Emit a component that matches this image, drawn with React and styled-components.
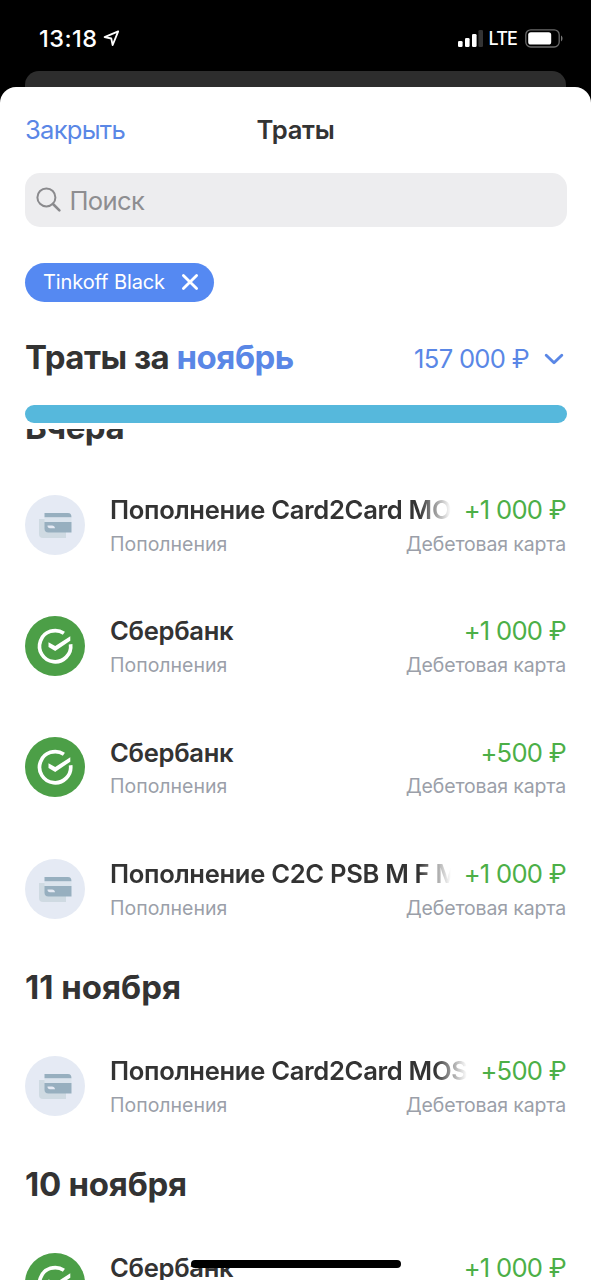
import React from "react";
import styled, { createGlobalStyle } from "styled-components";

const GlobalStyle = createGlobalStyle`
  * {
    box-sizing: border-box;
  }
  body {
    margin: 0;
    background: #000;
    font-family: Inter, "Liberation Sans", sans-serif;
    color: #333333;
  }
`;

const Screen = styled.div`
  position: relative;
  display: flex;
  flex-direction: column;
  height: 1280px;
  overflow: hidden;
  background: #000;
`;

const StatusBar = styled.div`
  display: flex;
  align-items: center;
  justify-content: space-between;
  height: 71px;
  padding: 5px 27px 0 39px;
  color: #fff;
`;

const StatusGroup = styled.div`
  display: flex;
  align-items: center;
`;

const Time = styled.span`
  font-size: 23.5px;
  font-weight: 500;
  letter-spacing: 0.5px;
  margin-right: 5px;
`;

const Network = styled.span`
  font-size: 18px;
  font-weight: 500;
  letter-spacing: -0.9px;
  margin: 1px 8px 0 6px;
`;

// the screen that stays behind the modal
const BackSheet = styled.div`
  flex: none;
  height: 30px;
  margin: 0 25px -14px;
  border-radius: 14px 14px 0 0;
  background: #2d2d2d;
`;

const Sheet = styled.div`
  position: relative;
  display: flex;
  flex-direction: column;
  flex: 1;
  min-height: 0;
  border-radius: 16px 16px 0 0;
  background: #fff;
`;

const Header = styled.div`
  display: grid;
  grid-template-columns: 1fr auto 1fr;
  align-items: center;
  height: 86px;
  padding: 0 25px 2px;
`;

const CloseButton = styled.button`
  justify-self: start;
  padding: 0;
  border: 0;
  background: none;
  font: inherit;
  font-size: 25.6px;
  letter-spacing: -0.75px;
  color: #5a87e6;
`;

const Title = styled.h1`
  margin: 0;
  font-size: 25.6px;
  font-weight: 600;
  letter-spacing: -0.3px;
`;

const Search = styled.div`
  display: flex;
  align-items: center;
  flex: none;
  height: 54px;
  margin: 0 24.5px;
  padding-left: 11px;
  border-radius: 15px;
  background: #ededef;
  font-size: 25.6px;
  letter-spacing: -0.65px;
  color: #8e8e91;

  span {
    margin-left: 8px;
  }
`;

const Chip = styled.div`
  display: flex;
  align-items: center;
  flex: none;
  align-self: flex-start;
  width: 189px;
  height: 39px;
  margin: 35.5px 0 0 24.5px;
  padding-left: 18.5px;
  border-radius: 20px;
  background: #5589f2;
  font-size: 20px;
  letter-spacing: -0.1px;
  color: #fff;

  svg {
    margin-left: 16px;
  }
`;

const Summary = styled.div`
  display: flex;
  align-items: center;
  justify-content: space-between;
  flex: none;
  height: 103.5px;
  padding: 7px 25px 0;
`;

const Heading = styled.h2`
  margin: 0;
  font-size: 33px;
  font-weight: 700;
  letter-spacing: ${(props) => props.$spacing || "-0.5px"};

  em {
    font-style: normal;
    color: #5a87e6;
  }
`;

const Total = styled.div`
  display: flex;
  align-items: center;
  padding-top: 3px;
  font-size: 25.6px;
  letter-spacing: -0.7px;
  color: #5a87e6;

  svg {
    margin: 2px 2px 0 15px;
  }
`;

const Progress = styled.div`
  flex: none;
  height: 18px;
  margin: 0 24.5px 6px;
  border-radius: 9px;
  background: #56b8dc;
`;

const List = styled.div`
  flex: 1;
  min-height: 0;
  overflow: hidden;
`;

// list is scrolled a little, so the first heading is cut off
const ListContent = styled.div`
  margin-top: -40.7px;
`;

const SectionTitle = styled.div`
  display: flex;
  align-items: center;
  height: 75.7px;
  padding: 0.8px 25px 0;
`;

const Row = styled.div`
  display: flex;
  align-items: center;
  height: 121.3px;
  padding: 0 25px;
`;

const Texts = styled.div`
  flex: 1;
  min-width: 0;
  margin-left: 25px;
  padding-top: 2px;
`;

const Line = styled.div`
  display: flex;
  align-items: center;
  justify-content: space-between;
  height: ${(props) => props.$height}px;
  white-space: nowrap;
`;

const Name = styled.div`
  flex: 1;
  min-width: 0;
  margin-right: 13px;
  overflow: hidden;
  font-size: 25.6px;
  font-weight: 600;
  letter-spacing: -0.32px;
  mask-image: ${(props) =>
    props.$fade ? "linear-gradient(to left, transparent 0, #000 32px)" : "none"};
`;

const Amount = styled.div`
  font-size: 25.6px;
  letter-spacing: -0.72px;
  color: #4caf47;
`;

const Note = styled.div`
  font-size: 19.5px;
  letter-spacing: ${(props) => props.$spacing || "0"};
  color: #9b9fa9;
`;

const HomeIndicator = styled.div`
  position: absolute;
  left: 191px;
  bottom: 12px;
  width: 210px;
  height: 8px;
  border-radius: 4px;
  background: #000;
`;

const LocationIcon = () => (
  <svg width="17" height="17" viewBox="0 0 17 17" fill="none">
    <path
      d="M15.2 1.3L1.6 7.2L8.3 8.5L9.6 15.2Z"
      stroke="#fff"
      strokeWidth="1.8"
      strokeLinejoin="round"
    />
  </svg>
);

const SignalIcon = () => (
  <svg width="26" height="17" viewBox="0 0 26 17" fill="#fff">
    <rect x="1" y="11" width="4.6" height="6" rx="1.3" />
    <rect x="8" y="8" width="4.6" height="9" rx="1.3" />
    <rect x="15" y="4" width="4.6" height="13" rx="1.3" />
    <rect x="21.4" y="0" width="4.6" height="17" rx="1.3" fill="#333" />
  </svg>
);

const BatteryIcon = () => (
  <svg width="39" height="19" viewBox="0 0 39 19">
    <rect
      x="0.8"
      y="0.8"
      width="33.4"
      height="17.2"
      rx="5"
      fill="none"
      stroke="#6a6a6a"
      strokeWidth="1.3"
    />
    <rect x="3.2" y="3.2" width="23" height="12.4" rx="2.6" fill="#fff" />
    <path d="M36 6.6c2 .8 2 5 0 5.8z" fill="#777" />
  </svg>
);

const SearchIcon = () => (
  <svg width="26" height="26" viewBox="0 0 26 26" fill="none" stroke="#8a8a8d">
    <circle cx="10.4" cy="10.4" r="9" strokeWidth="2" />
    <path d="M17 17L23.4 23.4" strokeWidth="2.6" strokeLinecap="round" />
  </svg>
);

const CrossIcon = () => (
  <svg width="18" height="18" viewBox="0 0 18 18">
    <path
      d="M2.4 2.4L15.6 15.6M15.6 2.4L2.4 15.6"
      stroke="#fff"
      strokeWidth="2.8"
      strokeLinecap="round"
    />
  </svg>
);

const ChevronIcon = () => (
  <svg width="20" height="13" viewBox="0 0 20 13" fill="none">
    <path
      d="M2.2 2.2L10 9.8L17.8 2.2"
      stroke="#5a87e6"
      strokeWidth="2.9"
      strokeLinecap="round"
      strokeLinejoin="round"
    />
  </svg>
);

const CardIcon = () => (
  <svg width="60" height="60" viewBox="0 0 60 60">
    <circle cx="30" cy="30" r="30" fill="#e5eaf4" />
    <path d="M14 24H41V43H18Q14 43 14 39Z" fill="#cfdae2" />
    <path d="M19.5 22.5H46.5V27H19.5Z" fill="#dbe4ed" />
    <path d="M19.5 18H43Q46.5 18 46.5 22.3H19.5Z" fill="#97afbf" />
    <path d="M19.5 27H46.5V37.5H23.5Q19.5 37.5 19.5 33.5Z" fill="#97afbf" />
    <path d="M22.5 30.5H27Q29.5 30.5 30 33.3H25Q22.5 33.3 22.5 30.5Z" fill="#e5eaf4" />
  </svg>
);

const SberIcon = () => (
  <svg width="60" height="60" viewBox="0 0 60 60" fill="none">
    <circle cx="30" cy="30" r="30" fill="#4c9f47" />
    <path
      d="M38.9 17.3A15.6 15.6 0 1 0 45.6 28.2"
      stroke="#fff"
      strokeWidth="3.7"
    />
    <path
      d="M23.5 26.2V31L30.2 35L45.3 24.7V20.2L30.2 30.1Z"
      fill="#fff"
    />
  </svg>
);

const icons = {
  card: CardIcon,
  sber: SberIcon,
};

const sections = [
  {
    title: "Вчера",
    items: [
      { icon: "card", name: "Пополнение Card2Card MO", amount: "+1 000 ₽", fade: true },
      { icon: "sber", name: "Сбербанк", amount: "+1 000 ₽" },
      { icon: "sber", name: "Сбербанк", amount: "+500 ₽" },
      { icon: "card", name: "Пополнение C2C PSB M F M", amount: "+1 000 ₽", fade: true },
    ],
  },
  {
    title: "11 ноября",
    spacing: "0",
    items: [
      { icon: "card", name: "Пополнение Card2Card MOS", amount: "+500 ₽", fade: true },
    ],
  },
  {
    title: "10 ноября",
    spacing: "-0.25px",
    items: [{ icon: "sber", name: "Сбербанк", amount: "+1 000 ₽" }],
  },
];

const Operation = ({ item }) => {
  const Icon = icons[item.icon];

  return (
    <Row>
      <Icon />
      <Texts>
        <Line $height={36}>
          <Name $fade={item.fade}>{item.name}</Name>
          <Amount>{item.amount}</Amount>
        </Line>
        <Line $height={32}>
          <Note>Пополнения</Note>
          <Note $spacing="-0.15px">Дебетовая карта</Note>
        </Line>
      </Texts>
    </Row>
  );
};

const App = () => {
  return (
    <>
      <GlobalStyle />
      <Screen>
        <StatusBar>
          <StatusGroup>
            <Time>13:18</Time>
            <LocationIcon />
          </StatusGroup>
          <StatusGroup>
            <SignalIcon />
            <Network>LTE</Network>
            <BatteryIcon />
          </StatusGroup>
        </StatusBar>
        <BackSheet />
        <Sheet>
          <Header>
            <CloseButton>Закрыть</CloseButton>
            <Title>Траты</Title>
          </Header>
          <Search>
            <SearchIcon />
            <span>Поиск</span>
          </Search>
          <Chip>
            Tinkoff Black
            <CrossIcon />
          </Chip>
          <Summary>
            <Heading>
              Траты за <em>ноябрь</em>
            </Heading>
            <Total>
              157 000 ₽
              <ChevronIcon />
            </Total>
          </Summary>
          <Progress />
          <List>
            <ListContent>
              {sections.map((section) => (
                <React.Fragment key={section.title}>
                  <SectionTitle>
                    <Heading $spacing={section.spacing}>{section.title}</Heading>
                  </SectionTitle>
                  {section.items.map((item, index) => (
                    <Operation key={index} item={item} />
                  ))}
                </React.Fragment>
              ))}
            </ListContent>
          </List>
        </Sheet>
        <HomeIndicator />
      </Screen>
    </>
  );
};

export default App;
